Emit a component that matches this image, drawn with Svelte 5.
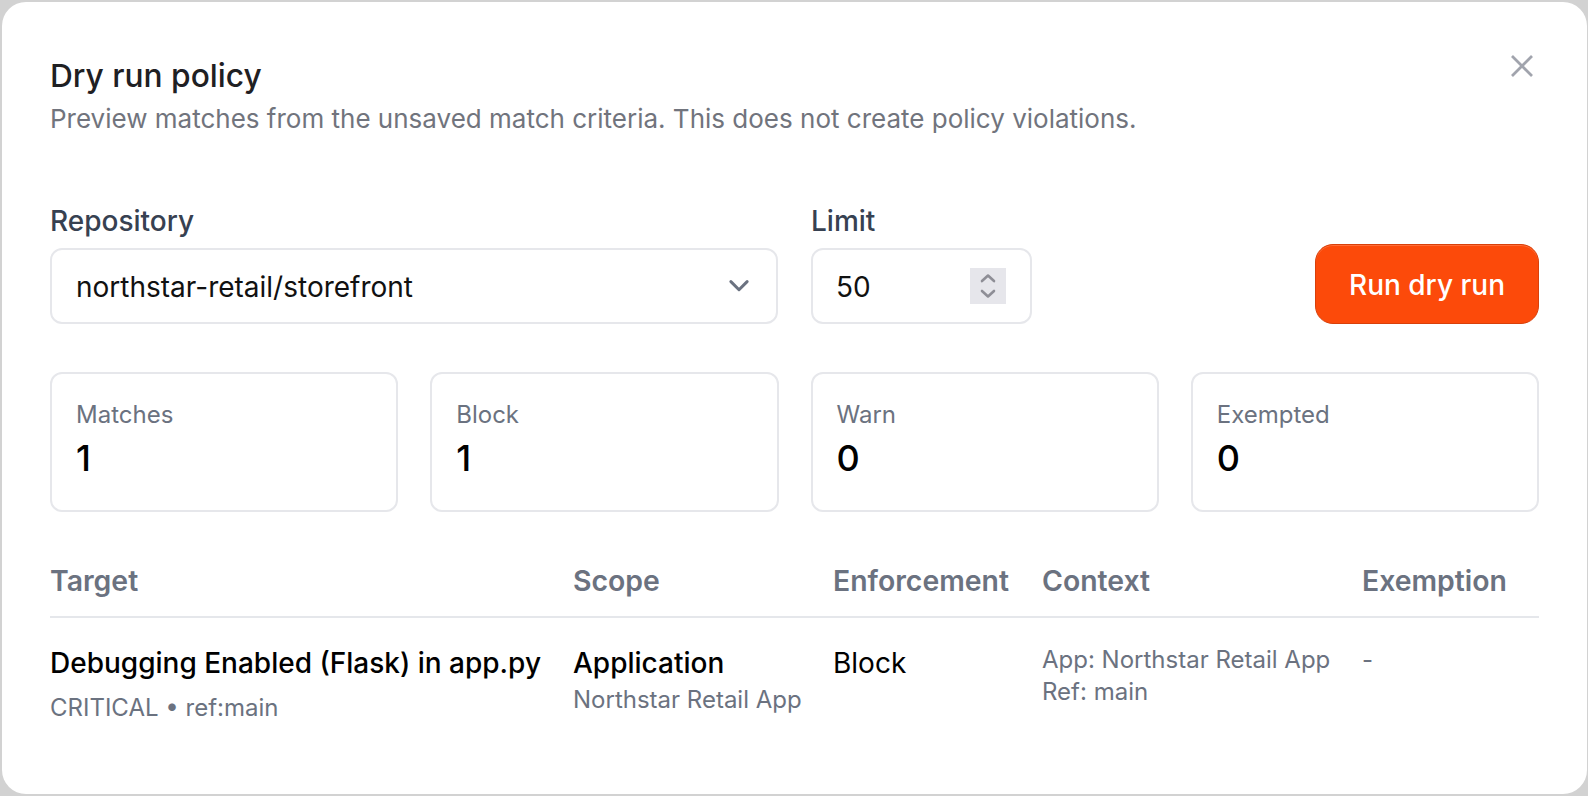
<script lang="ts">
  const stats = [
    { label: 'Matches', value: 1 },
    { label: 'Block', value: 1 },
    { label: 'Warn', value: 0 },
    { label: 'Exempted', value: 0 }
  ];
</script>

<div class="dialog">
  <button class="close" aria-label="Close">
    <svg viewBox="0 0 24 24" width="30" height="30" fill="none" stroke="currentColor" stroke-width="2.2">
      <path d="M4 4l16 16M20 4L4 20" />
    </svg>
  </button>

  <header class="head">
    <h2>Dry run policy</h2>
    <p>Preview matches from the unsaved match criteria. This does not create policy violations.</p>
  </header>

  <div class="form">
    <div class="field repo">
      <span class="label">Repository</span>
      <div class="control">
        <span>northstar-retail/storefront</span>
        <svg viewBox="0 0 24 24" width="30" height="30" fill="none" stroke="#6b7280" stroke-width="2.4" stroke-linecap="round" stroke-linejoin="round">
          <path d="M5.5 8.5l6.5 6.5 6.5-6.5" />
        </svg>
      </div>
    </div>
    <div class="field limit">
      <span class="label">Limit</span>
      <div class="control">
        <span>50</span>
        <span class="stepper">
          <svg viewBox="0 0 36 36" width="36" height="36" fill="none" stroke="#8e8e96" stroke-width="2.6" stroke-linecap="round" stroke-linejoin="round">
            <path d="M12 13l6-5.5 6 5.5M12 23l6 5.5 6-5.5" />
          </svg>
        </span>
      </div>
    </div>
    <button class="run">Run dry run</button>
  </div>

  <div class="stats">
    {#each stats as stat}
      <div class="stat">
        <div class="stat-label">{stat.label}</div>
        <div class="stat-value">{stat.value}</div>
      </div>
    {/each}
  </div>

  <table>
    <colgroup>
      <col style="width: 523px" />
      <col style="width: 260px" />
      <col style="width: 209px" />
      <col style="width: 320px" />
      <col />
    </colgroup>
    <thead>
      <tr>
        <th>Target</th>
        <th>Scope</th>
        <th>Enforcement</th>
        <th>Context</th>
        <th>Exemption</th>
      </tr>
    </thead>
    <tbody>
      <tr>
        <td>
          <div class="primary">Debugging Enabled (Flask) in app.py</div>
          <div class="meta">CRITICAL • ref:main</div>
        </td>
        <td>
          <div class="primary">Application</div>
          <div class="sub">Northstar Retail App</div>
        </td>
        <td><div class="primary plain">Block</div></td>
        <td class="context">
          <div>App: Northstar Retail App</div>
          <div>Ref: main</div>
        </td>
        <td class="context">-</td>
      </tr>
    </tbody>
  </table>
</div>

<style>
  :global(body) {
    background: #d2d2d2;
    font-family: Inter, "Liberation Sans", sans-serif;
  }
  .dialog {
    position: relative;
    box-sizing: border-box;
    width: 1585px;
    height: 792px;
    margin: 2px 0 0 2px;
    padding: 54px 48px 0;
    background: #fff;
    border-radius: 24px;
  }
  .close {
    position: absolute;
    top: 49px;
    right: 50px;
    padding: 0;
    border: 0;
    background: none;
    color: #a1a4ad;
    display: flex;
  }
  .head h2 {
    margin: 0;
    font-size: 31.7px;
    line-height: 40px;
    font-weight: 500;
    color: #1f2023;
  }
  .head p {
    margin: 5px 0 0;
    font-size: 26px;
    line-height: 36px;
    color: #71747d;
  }
  .form {
    display: flex;
    align-items: flex-end;
    gap: 33px;
    margin-top: 65px;
  }
  .field {
    display: flex;
    flex-direction: column;
    gap: 8px;
  }
  .repo {
    width: 728px;
  }
  .limit {
    width: 221px;
  }
  .label {
    font-size: 28px;
    line-height: 38px;
    font-weight: 500;
    color: #374151;
  }
  .control {
    box-sizing: border-box;
    height: 76px;
    display: flex;
    align-items: center;
    justify-content: space-between;
    padding: 0 24px;
    border: 2px solid #e6e7eb;
    border-radius: 12px;
    font-size: 28px;
    color: #111;
  }
  .repo .control {
    padding-right: 22px;
  }
  .limit .control {
    padding-left: 23px;
  }
  .control span:first-child {
    position: relative;
    top: 1px;
  }
  .stepper {
    display: flex;
    background: #e6e6eb;
  }
  .run {
    margin-left: auto;
    width: 224px;
    height: 80px;
    padding-top: 2px;
    border: 1px solid #d8400a;
    border-radius: 18px;
    background: #fc4a0a;
    box-shadow: inset 0 1px 0 #ff6d38;
    color: #fff;
    font: 500 28px Inter, "Liberation Sans", sans-serif;
  }
  .stats {
    display: grid;
    grid-template-columns: repeat(4, 1fr);
    gap: 32px;
    margin-top: 48px;
  }
  .stat {
    box-sizing: border-box;
    height: 140px;
    padding: 25px 24px;
    border: 2px solid #e6e7eb;
    border-radius: 12px;
  }
  .stat-label {
    font-size: 24px;
    line-height: 32px;
    color: #6b7280;
  }
  .stat-value {
    margin-top: 5px;
    font-size: 36px;
    line-height: 44px;
    font-weight: 500;
    color: #000;
  }
  table {
    width: 100%;
    margin-top: 51px;
    border-collapse: collapse;
    table-layout: fixed;
  }
  th {
    padding: 0 0 17px;
    border-bottom: 2px solid #e5e7eb;
    text-align: left;
    font-size: 28.4px;
    line-height: 36px;
    font-weight: 600;
    color: #6b7280;
    white-space: nowrap;
  }
  td {
    padding: 25px 0 0;
    vertical-align: top;
  }
  .primary {
    font-size: 28px;
    line-height: 40px;
    font-weight: 500;
    color: #000;
    white-space: nowrap;
  }
  .plain {
    font-weight: 400;
  }
  .meta {
    margin-top: 7px;
    font-size: 24px;
    line-height: 36px;
    color: #6b7280;
  }
  .sub {
    margin-top: 1px;
    font-size: 24px;
    line-height: 32px;
    color: #6b7280;
  }
  .context {
    padding-top: 26px;
    font-size: 24px;
    line-height: 32px;
    color: #6b7280;
  }
</style>
